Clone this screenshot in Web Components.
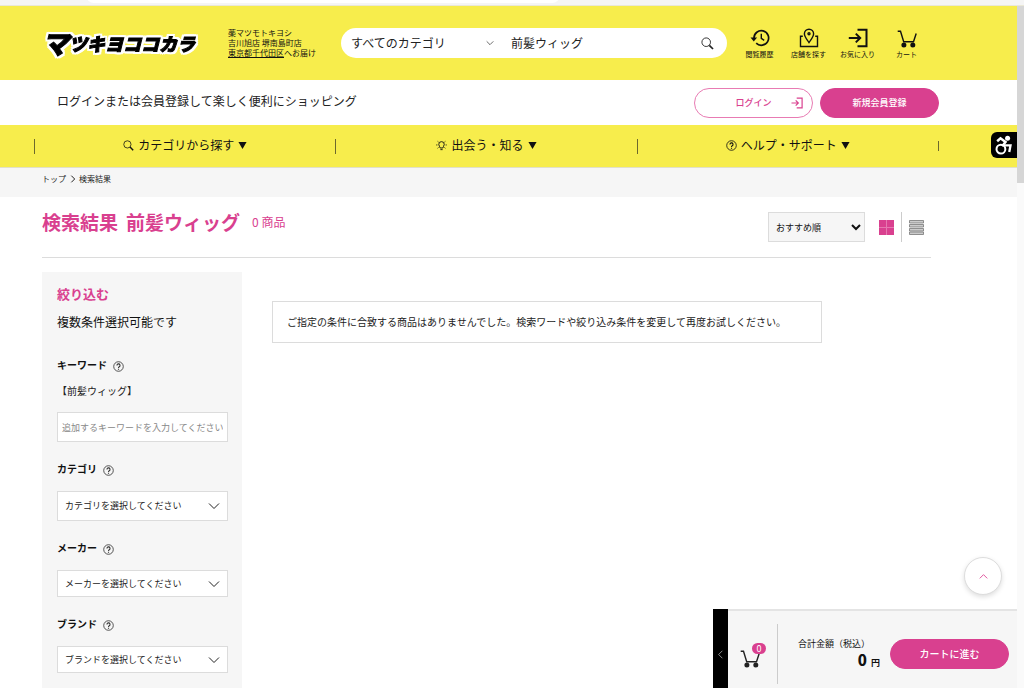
<!DOCTYPE html>
<html lang="ja">
<head>
<meta charset="utf-8">
<meta name="viewport" content="width=device-width, initial-scale=1">
<title>検索結果 前髪ウィッグ</title>
<style>
:root{--yellow:#f7ed4c;--pink:#d9408f;--grey:#f6f6f6;--line:#dcdcdc}
html,body{margin:0;height:100%;overflow:hidden}
body{font-family:"Noto Sans CJK JP","Noto Sans",sans-serif;font-size:12px;line-height:20px;color:#222;background:#fff}
</style>
</head>
<body>
<shop-page></shop-page>
<script>
const RESET = `*{box-sizing:border-box}a{color:inherit;text-decoration:none}button,input,select{font:inherit;color:inherit;margin:0;border-radius:0}button{padding:0;border:0;background:none;cursor:pointer}svg{display:block;flex:none}h1,h2,p,ol,ul{margin:0;padding:0;list-style:none}`;
const define = (name, css, html) => customElements.define(name, class extends HTMLElement {
  constructor() {
    super();
    const root = this.attachShadow({ mode: 'open' });
    root.innerHTML = `<style>${RESET}${css}</style>${typeof html === 'function' ? html(this) : html}`;
  }
});

const ICONS = {
  history: [20, '<g fill="none" stroke="currentColor" stroke-width="1.7"><path d="M4 11V10a7.3 7.3 0 1 1 2.2 5.2"/><path d="M11.3 5.8v4.6l2.9 1.9" stroke-width="1.4"/></g><path d="M.5 9.6h6.6L3.8 13.4z" fill="currentColor"/>'],
  shop: [20, '<g fill="none" stroke="currentColor" stroke-width="1.4"><path d="M3.8 8.2H1.5v10.3h17V8.2h-2.3M10 14.5C8.4 12 5.4 9 5.4 5.8a4.6 4.6 0 0 1 9.2 0c0 3.2-3 6.2-4.6 8.7z"/><circle cx="10" cy="5.7" r="1"/></g>'],
  enter: [20, '<path d="M9.5 1.8h9v16.4h-9M.8 10h11M7.8 5.6l4.4 4.4-4.4 4.4" fill="none" stroke="currentColor" stroke-width="2"/>'],
  cart: [20, '<path d="M.7 3.2h2.8l3.2 10.5h9.800l2.700-8.200" fill="none" stroke="currentColor" stroke-width="1.400"/><circle cx="6.900" cy="17" r="2.500" fill="currentColor"/><circle cx="15.800" cy="17" r="2.500" fill="currentColor"/>'],
  search: [20, '<circle cx="8" cy="8" r="6.600" fill="none" stroke="currentColor" stroke-width="1.400"/><path d="M12.800 12.800l5.700 5.700" stroke="currentColor" stroke-width="2.600"/>'],
  bulb: [20, '<path d="M7.500 14.500C7.500 12 5 11 5 8a5 5 0 0 1 10 0c0 3-2.500 4-2.500 6.500zM8 17.500h4M.5 9h2M17.500 9h2M3 2.500l1.500 1.300M17 2.500l-1.500 1.300M3 15l1.500-1.300M17 15l-1.500-1.300" fill="none" stroke="currentColor" stroke-width="1.700"/>'],
  help: [20, '<circle cx="10" cy="10" r="8.700" fill="none" stroke="currentColor" stroke-width="1.500"/><path d="M7.200 8a2.800 2.800 0 1 1 4.200 2.400c-1 .6-1.400 1-1.400 2.100M10 14v2" fill="none" stroke="currentColor" stroke-width="2"/>'],
  down: [12, '<path d="M1 3.500l5 5 5-5" fill="none" stroke="currentColor"/>'],
  up: [12, '<path d="M1 8.500l5-5 5 5" fill="none" stroke="currentColor" stroke-width="1.300"/>'],
  left: [12, '<path d="M8.500 1l-5 5 5 5" fill="none" stroke="currentColor"/>'],
  right: [12, '<path d="M3.500 1l5 5-5 5" fill="none" stroke="currentColor" stroke-width="1.500"/>'],
  triangle: [10, '<path d="M.5 1h9L5 9z" fill="currentColor"/>'],
  grid: [15, '<path d="M0 0h7v7H0zM8 0h7v7H8zM0 8h7v7H0zM8 8h7v7H8z" fill="#d9408f"/><path d="M7 0h1v15H7zM0 7h15v1H0z" fill="#e678b0"/>'],
  list: [15, '<path d="M.5.500h14v2.500h-14zM.5 4.500h14V7h-14zM.5 8.500h14V11h-14zM.5 12h14v2.500h-14z" fill="#ccc" stroke="#777" stroke-width=".8"/>'],
  access: [24, '<circle cx="17.500" cy="4" r="3" fill="currentColor"/><path d="M5 7.500l4-3.500 6 4.500-4 5" fill="none" stroke="currentColor" stroke-width="3"/><circle cx="9.500" cy="17" r="5.300" fill="none" stroke="currentColor" stroke-width="2.400"/><path d="M13 12.500h8l-1.500 8" fill="none" stroke="currentColor" stroke-width="2.800"/>']
};
define('ui-icon', ':host{display:block;flex:none}', el => {
  const [box, body] = ICONS[el.getAttribute('name')];
  const size = el.getAttribute('size');
  return `<svg width="${size}" height="${size}" viewBox="0 0 ${box} ${box}" aria-hidden="true">${body}</svg>`;
});

define('shop-logo', `:host{display:block;flex:0 0 156px}
a{display:flex;align-items:center;height:36px;color:#000;font-size:18px;line-height:36px;font-weight:900;font-style:italic;white-space:nowrap;-webkit-text-stroke:1px #000;
filter:drop-shadow(2px 0 0 #fff) drop-shadow(-2px 0 0 #fff) drop-shadow(0 2px 0 #fff) drop-shadow(0 -2px 0 #fff)}
span{font-size:27px}`, `<a href="#" aria-label="マツキヨココカラ"><span>マ</span>ツキヨココカラ</a>`);

define('header-link', `:host{display:block;flex:0 0 49px}
a{display:flex;flex-direction:column;align-items:center;gap:1px;font-size:7px;line-height:10px;color:#111;white-space:nowrap}`,
  el => `<a href="#"><ui-icon name="${el.getAttribute('icon')}" size="20"></ui-icon><slot></slot></a>`);

define('search-box', `:host{display:block;flex:1;min-width:0}
form{display:flex;align-items:center;height:30px;border-radius:15px;background:#fff;padding:0 13px 0 10px}
.cat{display:flex;align-items:center;position:relative;flex:0 0 160px}
select{appearance:none;border:0;background:none;width:100%;height:30px;padding:0;outline:0}
.cat ui-icon{position:absolute;right:17px;pointer-events:none}
input{border:0;background:none;outline:0;padding:0 0 2px;flex:1;min-width:0;height:30px}`,
  `<form role="search" onsubmit="return false"><div class="cat"><select aria-label="カテゴリ"><option>すべてのカテゴリ</option></select><ui-icon name="down" size="8"></ui-icon></div>
<input type="text" aria-label="検索ワード" value="前髪ウィッグ"><button aria-label="検索"><ui-icon name="search" size="13"></ui-icon></button></form>`);

define('shop-header', `:host{display:flex;align-items:center;height:74px;background:var(--yellow);padding:0 86px 0 42px}
address{font-style:normal;font-size:8px;line-height:10px;flex:0 0 92px;margin:0 21px 0 30px;white-space:nowrap;color:#111}
address a{text-decoration:underline}
nav{display:flex;margin-left:8px}`,
  `<shop-logo></shop-logo><address>薬マツモトキヨシ<br>吉川旭店 堺南島町店<br><a href="#">東京都千代田区</a>へお届け</address>
<search-box></search-box><nav><header-link icon="history">閲覧履歴</header-link><header-link icon="shop">店舗を探す</header-link><header-link icon="enter">お気に入り</header-link><header-link icon="cart">カート</header-link></nav>`);

define('pill-button', `:host{display:block}
button{position:relative;display:block;width:119px;height:30px;border-radius:15px;border:1px solid var(--pink);background:var(--pink);color:#fff;font-size:9px;font-weight:500}
:host([outline]) button{background:#fff;color:var(--pink);border-color:#e87bb3}
:host([large]) button{font-size:10px}
ui-icon{position:absolute;right:9px;top:8px}`,
  el => `<button type="button"><slot></slot>${el.hasAttribute('outline') ? '<ui-icon name="enter" size="12"></ui-icon>' : ''}</button>`);

define('login-row', `:host{display:flex;align-items:center;gap:7px;height:45px;padding:0 78px 0 57px}p{flex:1;padding-bottom:4px}`,
  `<p>ログインまたは会員登録して楽しく便利にショッピング</p><pill-button outline>ログイン</pill-button><pill-button>新規会員登録</pill-button>`);

define('nav-entry', `:host{display:block;flex:1}
a{display:flex;align-items:center;justify-content:center;gap:4px;color:#111;padding-bottom:2px}`,
  el => `<a href="#"><ui-icon name="${el.getAttribute('icon')}" size="11"></ui-icon><span><slot></slot></span><ui-icon name="triangle" size="9"></ui-icon></a>`);
define('shop-nav', `:host{display:block;background:var(--yellow);border-bottom:1px solid #e2e0c8;padding:0 78px 0 34px}
nav{display:flex;align-items:center;height:42px}
i{flex:0 0 1px;height:15px;background:#6d692c}i.end{height:10px}`,
  `<nav><i></i><nav-entry icon="search">カテゴリから探す</nav-entry><i></i><nav-entry icon="bulb">出会う・知る</nav-entry><i></i><nav-entry icon="help">ヘルプ・サポート</nav-entry><i class="end"></i></nav>`);

define('bread-crumb', `:host{display:block;background:var(--grey);height:29px;padding:6px 42px}
ol{display:flex;align-items:center;gap:3px;font-size:8px;line-height:10px}li{display:flex;align-items:center;gap:2px}`,
  `<nav aria-label="パンくず"><ol><li><a href="#">トップ</a></li><li><ui-icon name="right" size="8"></ui-icon>検索結果</li></ol></nav>`);

define('result-heading', `:host{display:flex;align-items:flex-start;border-bottom:1px solid var(--line);padding:15px 0}
h1{display:flex;gap:8px;font-size:19px;line-height:20px;color:var(--pink);font-weight:700}
.count{margin-left:12px;color:var(--pink);font-size:12px}
.tools{display:flex;align-items:center;margin-left:auto;padding-right:7px}
select{width:97px;height:30px;border:1px solid var(--line);background:var(--grey);font-size:9px;padding:0 0 0 3px;color:#111}
.grid{margin:0 7px 0 14px}.list{border-left:1px solid #ccc;padding-left:7px;height:30px}`,
  `<h1><span>検索結果</span> <span>前髪ウィッグ</span></h1><span class="count">0 商品</span>
<div class="tools"><select aria-label="並び順"><option>おすすめ順</option></select><button class="grid" aria-label="グリッド表示"><ui-icon name="grid" size="15"></ui-icon></button><button class="list" aria-label="リスト表示"><ui-icon name="list" size="15"></ui-icon></button></div>`);

define('filter-group', `:host{display:block;margin-top:17px}
.head{display:flex;align-items:center;gap:6px;font-size:10px;font-weight:700;color:#111}
button{color:#333;padding-top:2px}
.term{font-size:10px;margin-top:6px}
input,select{display:block;width:100%;height:27px;border:1px solid var(--line);background:#fff;font-size:9px;outline:0}
input{height:30px;padding:0 4px}input::placeholder{color:#888;opacity:1}
select{appearance:none;padding:0 24px 0 7px}
:host([tall]) select{height:30px}
.field{display:flex;align-items:center;position:relative;margin-top:12px}
.term+.field{margin-top:11px}
.field ui-icon{position:absolute;right:8px;pointer-events:none}`,
  el => {
    const label = el.getAttribute('label'), term = el.getAttribute('term');
    return `<div class="head"><label for="f">${label}</label><button type="button" aria-label="${label}の説明"><ui-icon name="help" size="11"></ui-icon></button></div>` +
      (term ? `<p class="term">【${term}】</p><div class="field"><input id="f" type="text" placeholder="追加するキーワードを入力してください"></div>`
        : `<div class="field"><select id="f"><option>${label}を選択してください</option></select><ui-icon name="down" size="12"></ui-icon></div>`);
  });
define('filter-panel', `:host{display:block;background:var(--grey);padding:12px 14px 15px 15px}
h2{font-size:13px;line-height:20px;color:var(--pink);font-weight:700}p{margin:8px 0 23px;color:#111}`,
  `<h2>絞り込む</h2><p>複数条件選択可能です</p><filter-group label="キーワード" term="前髪ウィッグ"></filter-group><filter-group tall label="カテゴリ"></filter-group><filter-group label="メーカー"></filter-group><filter-group label="ブランド"></filter-group>`);

define('empty-notice', `:host{display:block;margin-top:29px;max-width:550px;border:1px solid var(--line);padding:10px 14px;font-size:10px;line-height:20px}`, `<p><slot></slot></p>`);

define('cart-bar', `:host{position:absolute;right:0;bottom:0;display:flex;align-items:stretch;width:304px;height:79px;border-top:2px solid #e4e4e4;background:var(--grey)}
.tab{flex:0 0 15px;background:#000;color:#bbb;display:flex;align-items:center;justify-content:center;padding-top:12px;margin-top:-2px}
.cart{flex:0 0 50px;margin:13px 0 4px;border-right:1px solid #ccc;display:flex;align-items:center;padding:8px 0 0 12px;position:relative;color:#222}
.badge{position:absolute;left:24px;top:19px;width:14px;height:11px;border-radius:6px;background:var(--pink);color:#fff;font-size:9px;line-height:11px;text-align:center}
.sum{flex:1;padding:26px 10px 0 20px;font-size:9px;line-height:14px;white-space:nowrap;color:#111}
.total{display:flex;justify-content:flex-end;align-items:baseline;gap:4px;font-weight:700;line-height:18px}.total b{font-size:15px;line-height:18px}
pill-button{margin:28px 8px 0 0}`,
  `<button class="tab" aria-label="閉じる"><ui-icon name="left" size="9"></ui-icon></button><a class="cart" href="#" aria-label="カート"><ui-icon name="cart" size="20"></ui-icon><span class="badge">0</span></a>
<div class="sum">合計金額（税込）<div class="total"><b>0</b><span>円</span></div></div><pill-button large>カートに進む</pill-button>`);

define('shop-page', `:host{display:grid;grid-template:6px minmax(0,1fr)/minmax(0,1fr) 7px;height:100vh}
.strip{grid-column:1/-1;background:#f5f5f5;border-bottom:1px solid #eae8d8;padding-left:86px;overflow:hidden}
.strip div{width:474px;height:12px;margin-top:-9px;border-radius:0 0 8px 8px;background:#fff}
.view{position:relative;overflow:hidden}
.content{display:flex;flex-direction:column;min-height:100%}
main{flex:1;display:flex;flex-direction:column;padding:0 86px 0 42px}
.cols{flex:1;display:grid;grid-template-columns:200px minmax(0,1fr);gap:30px;padding-top:14px;align-items:start}
filter-panel{align-self:stretch}
.bar{background:#fafafa}.bar div{height:26%;background:#d6d6d6}
.access{position:absolute;right:0;top:126px;width:26px;height:26px;border-radius:6px 0 0 6px;background:#000;color:#fff;padding-left:2px}
.top{position:absolute;right:15px;bottom:93px;width:38px;height:38px;border-radius:50%;border:1px solid #ddd;background:#fff;color:#e0559d;box-shadow:0 2px 5px #0002;display:flex;align-items:center;justify-content:center}`,
  `<div class="strip"><div></div></div>
<div class="view"><div class="content"><shop-header></shop-header><login-row></login-row><shop-nav></shop-nav><bread-crumb></bread-crumb>
<main><result-heading></result-heading><div class="cols"><filter-panel></filter-panel><empty-notice>ご指定の条件に合致する商品はありませんでした。検索ワードや絞り込み条件を変更して再度お試しください。</empty-notice></div></main></div>
<button class="access" aria-label="アクセシビリティ"><ui-icon name="access" size="20"></ui-icon></button><button class="top" aria-label="ページの先頭へ"><ui-icon name="up" size="9"></ui-icon></button><cart-bar></cart-bar></div>
<div class="bar"><div></div></div>`);
</script>
</body>
</html>
